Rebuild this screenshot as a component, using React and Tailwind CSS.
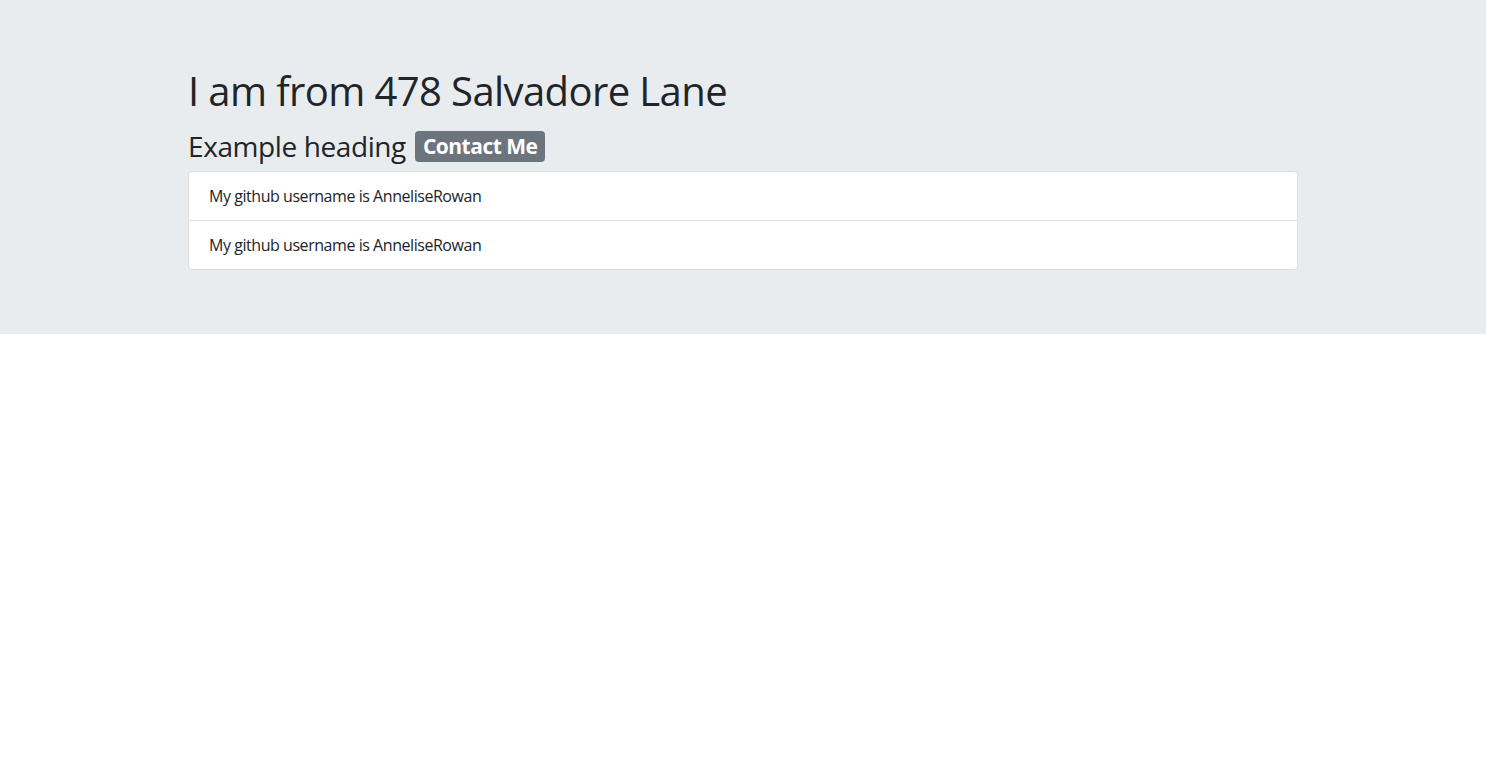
const App = () => {
  const items = ["AnneliseRowan", "AnneliseRowan"];

  return (
    <div className="min-h-[769px] bg-white text-[#212529] font-['Open_Sans',sans-serif]">
      {/* Jumbotron */}
      <div className="bg-[#e9ecef] pt-16 pb-16 px-8">
        <div className="w-[1110px] mx-auto">
          <h1 className="text-[40px] leading-[48px] font-medium tracking-[-0.6px] pt-[3px] mb-[5px]">
            I am from 478 Salvadore Lane
          </h1>
          <h3 className="text-[28px] leading-[34px] font-medium tracking-[-0.4px] pt-[9px] mb-2 flex items-center gap-[9px]">
            <span>Example heading</span>
            <span className="bg-[#6c757d] text-white text-[21px] leading-[21px] font-bold tracking-[-0.5px] px-2 py-[5px] rounded-[4px]">
              Contact Me
            </span>
          </h3>
          <ul className="bg-white border border-[#dfdfdf] rounded-[4px]">
            {items.map((name, i) => (
              <li
                key={i}
                className={`px-5 py-3 text-base leading-6 tracking-[-0.45px] ${i > 0 ? "border-t border-[#dfdfdf]" : ""}`}
              >
                My github username is {name}
              </li>
            ))}
          </ul>
        </div>
      </div>
    </div>
  );
};

export default App;
